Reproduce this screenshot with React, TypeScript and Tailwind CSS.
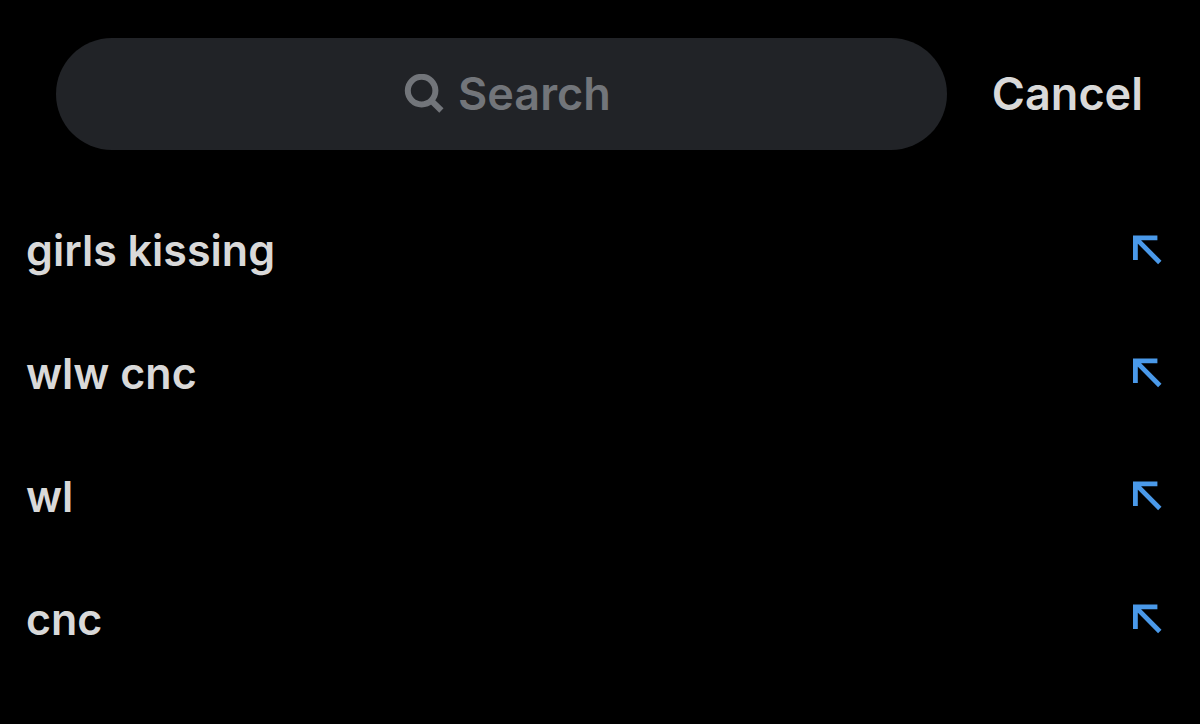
import React, { useState } from "react";

const suggestions = ["girls kissing", "wlw cnc", "wl", "cnc"];

function SearchIcon() {
  return (
    <svg viewBox="0 0 40 40" className="size-10 shrink-0" fill="none" stroke="#72757a" strokeWidth="6" aria-hidden="true">
      <circle cx="17.6" cy="16.6" r="13.8" />
      <path d="M27 26.3l10.4 10.2" />
    </svg>
  );
}

function FillIcon() {
  return (
    <svg viewBox="0 0 30 30" className="size-[30px]" fill="none" stroke="#4a99e9" strokeWidth="4.8" aria-hidden="true">
      <path d="M25.4 2.9H3.4v22M3.4 2.9l24.4 24.6" />
    </svg>
  );
}

export default function App() {
  const [query, setQuery] = useState("");
  return (
    <main className="min-h-screen bg-black font-['Inter',sans-serif] font-semibold text-[#d9d9d9]">
      <header className="flex items-center gap-[45px] pt-[38px] pr-[57px] pl-14">
        <label className="flex h-28 min-w-0 flex-1 items-center justify-center gap-[14px] rounded-full bg-[#212327] pl-3">
          <SearchIcon />
          <input
            type="text"
            aria-label="Search"
            placeholder="Search"
            value={query}
            onChange={(e) => setQuery(e.target.value)}
            className="field-sizing-content bg-transparent text-[45px] leading-14 outline-none placeholder:text-[#72757a]"
          />
        </label>
        <button type="button" className="text-[45px] leading-14">Cancel</button>
      </header>
      <ul className="pt-[38px]">
        {suggestions.map((text) => (
          <li key={text} className="flex h-[123px] items-center justify-between pr-[38px] pl-[26px]">
            <a href="#" className="text-[43px] leading-14">{text}</a>
            <button type="button" aria-label={`Use ${text}`} onClick={() => setQuery(text)}>
              <FillIcon />
            </button>
          </li>
        ))}
      </ul>
    </main>
  );
}
